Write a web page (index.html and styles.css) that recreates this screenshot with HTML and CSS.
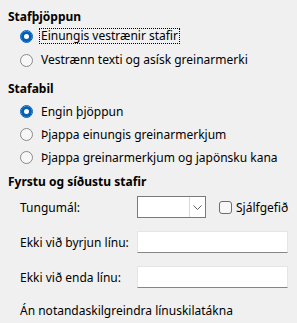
FILE: index.html
```html
<!DOCTYPE html>
<html lang="is">
<head>
    <meta charset="UTF-8">
    <title>Asísk leturgerð</title>
    <link rel="stylesheet" href="styles.css">
</head>
<body>
    <div class="panel">
        <div class="group">
            <div class="heading">Stafþjöppun</div>
            <div class="options">
                <label class="option checked focused"><span class="radio"></span><span class="text">Einungis vestrænir stafir</span></label>
                <label class="option"><span class="radio"></span><span class="text">Vestrænn texti og asísk greinarmerki</span></label>
            </div>
        </div>

        <div class="group">
            <div class="heading">Stafabil</div>
            <div class="options tight">
                <label class="option checked"><span class="radio"></span><span class="text">Engin þjöppun</span></label>
                <label class="option"><span class="radio"></span><span class="text">Þjappa einungis greinarmerkjum</span></label>
                <label class="option"><span class="radio"></span><span class="text">Þjappa greinarmerkjum og japönsku kana</span></label>
            </div>
        </div>

        <div class="group last">
            <div class="heading">Fyrstu og síðustu stafir</div>
            <div class="form">
                <div class="form-row lang">
                    <span class="label">Tungumál:</span>
                    <div class="combo">
                        <span class="combo-value"></span>
                        <span class="combo-btn">
                            <svg width="9" height="5" viewBox="0 0 9 5"><path d="M0.5 0.5 L4.5 4.5 L8.5 0.5" fill="none" stroke="#606060" stroke-width="1"/></svg>
                        </span>
                    </div>
                    <label class="check"><span class="box"></span>Sjálfgefið</label>
                </div>
                <div class="form-row">
                    <span class="label">Ekki við byrjun línu:</span>
                    <input class="field" type="text">
                </div>
                <div class="form-row">
                    <span class="label">Ekki við enda línu:</span>
                    <input class="field" type="text">
                </div>
                <div class="form-row note">Án notandaskilgreindra línuskilatákna</div>
            </div>
        </div>
    </div>
</body>
</html>
```

FILE: styles.css
```css
body {
    margin: 0;
    background-color: #f0f0f0;
    font-family: "Noto Sans", "Open Sans", sans-serif;
    font-size: 12px;
    color: #000;
}
.panel {
    padding: 9px 8px 0 8px;
}
.heading {
    font-weight: bold;
    height: 15px;
    line-height: 15px;
}
.group + .group {
    margin-top: 9px;
}
.group.last {
    margin-top: 5px;
}
.options {
    padding-left: 12px;
}
.options.tight {
    padding-top: 4px;
}
.option {
    display: flex;
    align-items: center;
    height: 24px;
}
.options.tight .option {
    height: 23px;
}
.radio {
    width: 11px;
    height: 11px;
    border: 1px solid #8a8a8a;
    border-radius: 50%;
    background-color: #f7f7f7;
    box-sizing: content-box;
    margin-right: 6px;
    flex: none;
}
.option.checked .radio {
    border-color: #005fb8;
    background-color: #fff;
    box-shadow: inset 0 0 0 3px #005fb8;
}
.option .text {
    padding: 0 1px;
    line-height: 14px;
    border: 1px solid transparent;
}
.option.focused .text {
    border: 1px dotted #000;
}
.form {
    padding-left: 12px;
    padding-top: 7px;
}
.form-row {
    display: flex;
    align-items: center;
    height: 22px;
    margin-bottom: 13px;
}
.form-row .label {
    width: 117px;
    flex: none;
}
.combo {
    display: flex;
    width: 69px;
    height: 22px;
    box-sizing: border-box;
    border: 1px solid #7a7a7a;
    background-color: #fff;
}
.combo-value {
    flex: 1;
}
.combo-btn {
    width: 15px;
    border-left: 1px solid #d9d9d9;
    display: flex;
    align-items: center;
    justify-content: center;
}
.check {
    display: flex;
    align-items: center;
    margin-left: 13px;
}
.check .box {
    width: 11px;
    height: 11px;
    border: 1px solid #6e6e6e;
    border-radius: 3px;
    background-color: #f7f7f7;
    margin-right: 4px;
}
.field {
    width: 151px;
    height: 22px;
    box-sizing: border-box;
    margin: 0;
    border: 1px solid #e5e5e5;
    border-bottom: 1px solid #868686;
    background-color: #fff;
    padding: 0 4px;
    font: inherit;
}
.form-row.note {
    margin-bottom: 0;
    height: 18px;
}
```
